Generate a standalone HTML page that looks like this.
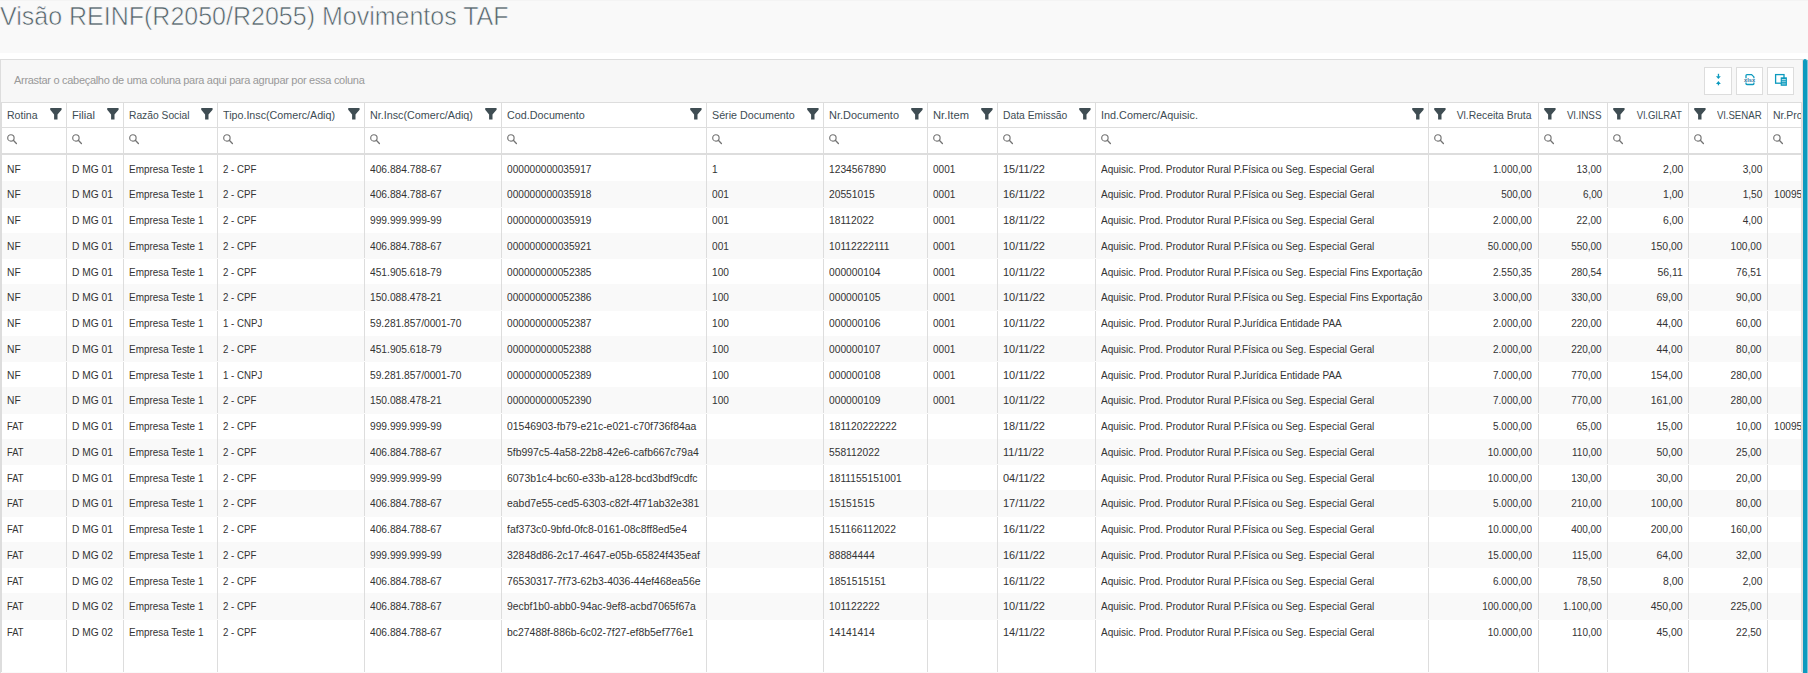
<!DOCTYPE html><html><head><meta charset="utf-8"><style>

html,body{margin:0;padding:0}
body{width:1808px;height:673px;overflow:hidden;position:relative;background:#f9f9f9;font-family:"Liberation Sans",sans-serif}
.a{position:absolute}
svg{display:block}
.title{left:0;top:4px;font-size:25px;line-height:25px;color:#53636a;white-space:nowrap;-webkit-text-stroke:0.6px #f9f9f9}
.band{left:0;top:53px;width:1808px;height:6px;background:#fff}
.grid{left:0;top:59px;width:1803px;height:614px;background:#fff;box-sizing:border-box;border:1px solid #ddd;border-bottom:0;overflow:hidden}
.tb{left:1px;top:60px;width:1801px;height:42px;background:#f7f7f7}
.tbtxt{left:14px;top:73px;font-size:11px;line-height:14px;color:#999;letter-spacing:-0.3px;white-space:nowrap}
.btn{top:67px;height:28px;box-sizing:border-box;border:1px solid #ddd;background:#fff}
.hl{left:1px;width:1801px;background:#ddd}
.vl{width:1px;background:#ddd}
.rowbg{left:2px;width:1799px;background:#f9f9f9}
.ht{font-size:11px;line-height:14px;color:#3d4c53;white-space:nowrap;top:108px}
.c{font-size:11px;line-height:14px;color:#333;white-space:nowrap}
.fi{top:108px;width:12px;height:12px}
.si{top:134px;width:12px;height:12px}
.sb{left:1803px;top:59px;width:4px;height:614px;background:#0c9abe;border-radius:2px 2px 0 0}
.sb2{left:1807px;top:60px;width:1px;height:613px;background:#7cc4d8}

</style></head><body>
<div class="a title">Visão REINF(R2050/R2055) Movimentos TAF</div>
<div class="a band"></div>
<div class="a" style="left:0;top:0;width:1808px;height:1px;background:#f4f4f4"></div>
<div class="a grid"></div>
<div class="a tb"></div>
<div class="a tbtxt">Arrastar o cabeçalho de uma coluna para aqui para agrupar por essa coluna</div>
<div class="a btn" style="left:1704px;width:28px"></div>
<div class="a btn" style="left:1736px;width:27px"></div>
<div class="a btn" style="left:1767px;width:27px"></div>
<svg class="a" style="left:1713px;top:72px" width="12" height="15" viewBox="1713 72 12 15"><rect x="1717.8" y="73.8" width="1.3" height="3" fill="#0c9abe"/><path d="M1716 76.2 H1720.8 L1718.4 79.1 Z" fill="#0c9abe"/><path d="M1716 84 H1720.8 L1718.4 81.1 Z" fill="#0c9abe"/><rect x="1717.8" y="83.5" width="1.3" height="1.8" fill="#0c9abe"/></svg>
<svg class="a" style="left:1742px;top:72px" width="15" height="15" viewBox="1742 72 15 15"><path d="M1746 78.2 V75.6 Q1746 74.6 1747 74.6 H1751.6 L1753.9 76.9 V78.2" stroke="#0c9abe" stroke-width="1.3" fill="none"/><path d="M1746 82.6 V83.6 Q1746 84.5 1747 84.5 H1753 Q1753.9 84.5 1753.9 83.6 V82.6" stroke="#0c9abe" stroke-width="1.3" fill="none"/><text x="1749.6" y="82.1" font-size="4.8" text-anchor="middle" textLength="11" lengthAdjust="spacingAndGlyphs" fill="#2a6e9c" font-family="Liberation Sans" font-weight="bold">xlsx</text></svg>
<svg class="a" style="left:1773px;top:72px" width="16" height="16" viewBox="1773 72 16 16"><rect x="1775.6" y="74.6" width="8.4" height="8.6" fill="none" stroke="#0c9abe" stroke-width="1.3"/><rect x="1780.7" y="77.3" width="6.2" height="8.5" fill="#0c9abe"/><rect x="1781.8" y="79.2" width="4" height="1" fill="#fff" opacity="0.85"/><rect x="1781.8" y="81.2" width="4" height="1" fill="#fff" opacity="0.6"/><rect x="1781.8" y="83" width="4" height="1.8" fill="#fff" opacity="0.35"/></svg>
<div class="a hl" style="top:102px;height:1px"></div>
<div class="a hl" style="top:127px;height:1px"></div>
<div class="a hl" style="top:153px;height:2px"></div>
<div class="a rowbg" style="top:181px;height:26.75px"></div>
<div class="a rowbg" style="top:232.5px;height:26.75px"></div>
<div class="a rowbg" style="top:284px;height:26.75px"></div>
<div class="a rowbg" style="top:335.5px;height:26.75px"></div>
<div class="a rowbg" style="top:387px;height:26.75px"></div>
<div class="a rowbg" style="top:438.5px;height:26.75px"></div>
<div class="a rowbg" style="top:490px;height:26.75px"></div>
<div class="a rowbg" style="top:541.5px;height:26.75px"></div>
<div class="a rowbg" style="top:593px;height:26.75px"></div>
<div class="a vl" style="left:1px;top:103px;height:570px"></div>
<div class="a vl" style="left:66px;top:103px;height:570px"></div>
<div class="a vl" style="left:123px;top:103px;height:570px"></div>
<div class="a vl" style="left:217px;top:103px;height:570px"></div>
<div class="a vl" style="left:364px;top:103px;height:570px"></div>
<div class="a vl" style="left:501px;top:103px;height:570px"></div>
<div class="a vl" style="left:706px;top:103px;height:570px"></div>
<div class="a vl" style="left:823px;top:103px;height:570px"></div>
<div class="a vl" style="left:927px;top:103px;height:570px"></div>
<div class="a vl" style="left:997px;top:103px;height:570px"></div>
<div class="a vl" style="left:1095px;top:103px;height:570px"></div>
<div class="a vl" style="left:1428px;top:103px;height:570px"></div>
<div class="a vl" style="left:1538px;top:103px;height:570px"></div>
<div class="a vl" style="left:1607px;top:103px;height:570px"></div>
<div class="a vl" style="left:1688px;top:103px;height:570px"></div>
<div class="a vl" style="left:1767px;top:103px;height:570px"></div>
<div class="a vl" style="left:1801px;top:103px;height:570px"></div>
<div class="a" style="left:66px;top:207px;width:1px;height:1px;background:#fbfbfb"></div>
<div class="a" style="left:123px;top:207px;width:1px;height:1px;background:#fbfbfb"></div>
<div class="a" style="left:217px;top:207px;width:1px;height:1px;background:#fbfbfb"></div>
<div class="a" style="left:364px;top:207px;width:1px;height:1px;background:#fbfbfb"></div>
<div class="a" style="left:501px;top:207px;width:1px;height:1px;background:#fbfbfb"></div>
<div class="a" style="left:706px;top:207px;width:1px;height:1px;background:#fbfbfb"></div>
<div class="a" style="left:823px;top:207px;width:1px;height:1px;background:#fbfbfb"></div>
<div class="a" style="left:927px;top:207px;width:1px;height:1px;background:#fbfbfb"></div>
<div class="a" style="left:997px;top:207px;width:1px;height:1px;background:#fbfbfb"></div>
<div class="a" style="left:1095px;top:207px;width:1px;height:1px;background:#fbfbfb"></div>
<div class="a" style="left:1428px;top:207px;width:1px;height:1px;background:#fbfbfb"></div>
<div class="a" style="left:1538px;top:207px;width:1px;height:1px;background:#fbfbfb"></div>
<div class="a" style="left:1607px;top:207px;width:1px;height:1px;background:#fbfbfb"></div>
<div class="a" style="left:1688px;top:207px;width:1px;height:1px;background:#fbfbfb"></div>
<div class="a" style="left:1767px;top:207px;width:1px;height:1px;background:#fbfbfb"></div>
<div class="a" style="left:66px;top:258px;width:1px;height:1px;background:#fbfbfb"></div>
<div class="a" style="left:123px;top:258px;width:1px;height:1px;background:#fbfbfb"></div>
<div class="a" style="left:217px;top:258px;width:1px;height:1px;background:#fbfbfb"></div>
<div class="a" style="left:364px;top:258px;width:1px;height:1px;background:#fbfbfb"></div>
<div class="a" style="left:501px;top:258px;width:1px;height:1px;background:#fbfbfb"></div>
<div class="a" style="left:706px;top:258px;width:1px;height:1px;background:#fbfbfb"></div>
<div class="a" style="left:823px;top:258px;width:1px;height:1px;background:#fbfbfb"></div>
<div class="a" style="left:927px;top:258px;width:1px;height:1px;background:#fbfbfb"></div>
<div class="a" style="left:997px;top:258px;width:1px;height:1px;background:#fbfbfb"></div>
<div class="a" style="left:1095px;top:258px;width:1px;height:1px;background:#fbfbfb"></div>
<div class="a" style="left:1428px;top:258px;width:1px;height:1px;background:#fbfbfb"></div>
<div class="a" style="left:1538px;top:258px;width:1px;height:1px;background:#fbfbfb"></div>
<div class="a" style="left:1607px;top:258px;width:1px;height:1px;background:#fbfbfb"></div>
<div class="a" style="left:1688px;top:258px;width:1px;height:1px;background:#fbfbfb"></div>
<div class="a" style="left:1767px;top:258px;width:1px;height:1px;background:#fbfbfb"></div>
<div class="a" style="left:66px;top:310px;width:1px;height:1px;background:#fbfbfb"></div>
<div class="a" style="left:123px;top:310px;width:1px;height:1px;background:#fbfbfb"></div>
<div class="a" style="left:217px;top:310px;width:1px;height:1px;background:#fbfbfb"></div>
<div class="a" style="left:364px;top:310px;width:1px;height:1px;background:#fbfbfb"></div>
<div class="a" style="left:501px;top:310px;width:1px;height:1px;background:#fbfbfb"></div>
<div class="a" style="left:706px;top:310px;width:1px;height:1px;background:#fbfbfb"></div>
<div class="a" style="left:823px;top:310px;width:1px;height:1px;background:#fbfbfb"></div>
<div class="a" style="left:927px;top:310px;width:1px;height:1px;background:#fbfbfb"></div>
<div class="a" style="left:997px;top:310px;width:1px;height:1px;background:#fbfbfb"></div>
<div class="a" style="left:1095px;top:310px;width:1px;height:1px;background:#fbfbfb"></div>
<div class="a" style="left:1428px;top:310px;width:1px;height:1px;background:#fbfbfb"></div>
<div class="a" style="left:1538px;top:310px;width:1px;height:1px;background:#fbfbfb"></div>
<div class="a" style="left:1607px;top:310px;width:1px;height:1px;background:#fbfbfb"></div>
<div class="a" style="left:1688px;top:310px;width:1px;height:1px;background:#fbfbfb"></div>
<div class="a" style="left:1767px;top:310px;width:1px;height:1px;background:#fbfbfb"></div>
<div class="a" style="left:66px;top:361px;width:1px;height:1px;background:#fbfbfb"></div>
<div class="a" style="left:123px;top:361px;width:1px;height:1px;background:#fbfbfb"></div>
<div class="a" style="left:217px;top:361px;width:1px;height:1px;background:#fbfbfb"></div>
<div class="a" style="left:364px;top:361px;width:1px;height:1px;background:#fbfbfb"></div>
<div class="a" style="left:501px;top:361px;width:1px;height:1px;background:#fbfbfb"></div>
<div class="a" style="left:706px;top:361px;width:1px;height:1px;background:#fbfbfb"></div>
<div class="a" style="left:823px;top:361px;width:1px;height:1px;background:#fbfbfb"></div>
<div class="a" style="left:927px;top:361px;width:1px;height:1px;background:#fbfbfb"></div>
<div class="a" style="left:997px;top:361px;width:1px;height:1px;background:#fbfbfb"></div>
<div class="a" style="left:1095px;top:361px;width:1px;height:1px;background:#fbfbfb"></div>
<div class="a" style="left:1428px;top:361px;width:1px;height:1px;background:#fbfbfb"></div>
<div class="a" style="left:1538px;top:361px;width:1px;height:1px;background:#fbfbfb"></div>
<div class="a" style="left:1607px;top:361px;width:1px;height:1px;background:#fbfbfb"></div>
<div class="a" style="left:1688px;top:361px;width:1px;height:1px;background:#fbfbfb"></div>
<div class="a" style="left:1767px;top:361px;width:1px;height:1px;background:#fbfbfb"></div>
<div class="a" style="left:66px;top:413px;width:1px;height:1px;background:#fbfbfb"></div>
<div class="a" style="left:123px;top:413px;width:1px;height:1px;background:#fbfbfb"></div>
<div class="a" style="left:217px;top:413px;width:1px;height:1px;background:#fbfbfb"></div>
<div class="a" style="left:364px;top:413px;width:1px;height:1px;background:#fbfbfb"></div>
<div class="a" style="left:501px;top:413px;width:1px;height:1px;background:#fbfbfb"></div>
<div class="a" style="left:706px;top:413px;width:1px;height:1px;background:#fbfbfb"></div>
<div class="a" style="left:823px;top:413px;width:1px;height:1px;background:#fbfbfb"></div>
<div class="a" style="left:927px;top:413px;width:1px;height:1px;background:#fbfbfb"></div>
<div class="a" style="left:997px;top:413px;width:1px;height:1px;background:#fbfbfb"></div>
<div class="a" style="left:1095px;top:413px;width:1px;height:1px;background:#fbfbfb"></div>
<div class="a" style="left:1428px;top:413px;width:1px;height:1px;background:#fbfbfb"></div>
<div class="a" style="left:1538px;top:413px;width:1px;height:1px;background:#fbfbfb"></div>
<div class="a" style="left:1607px;top:413px;width:1px;height:1px;background:#fbfbfb"></div>
<div class="a" style="left:1688px;top:413px;width:1px;height:1px;background:#fbfbfb"></div>
<div class="a" style="left:1767px;top:413px;width:1px;height:1px;background:#fbfbfb"></div>
<div class="a" style="left:66px;top:464px;width:1px;height:1px;background:#fbfbfb"></div>
<div class="a" style="left:123px;top:464px;width:1px;height:1px;background:#fbfbfb"></div>
<div class="a" style="left:217px;top:464px;width:1px;height:1px;background:#fbfbfb"></div>
<div class="a" style="left:364px;top:464px;width:1px;height:1px;background:#fbfbfb"></div>
<div class="a" style="left:501px;top:464px;width:1px;height:1px;background:#fbfbfb"></div>
<div class="a" style="left:706px;top:464px;width:1px;height:1px;background:#fbfbfb"></div>
<div class="a" style="left:823px;top:464px;width:1px;height:1px;background:#fbfbfb"></div>
<div class="a" style="left:927px;top:464px;width:1px;height:1px;background:#fbfbfb"></div>
<div class="a" style="left:997px;top:464px;width:1px;height:1px;background:#fbfbfb"></div>
<div class="a" style="left:1095px;top:464px;width:1px;height:1px;background:#fbfbfb"></div>
<div class="a" style="left:1428px;top:464px;width:1px;height:1px;background:#fbfbfb"></div>
<div class="a" style="left:1538px;top:464px;width:1px;height:1px;background:#fbfbfb"></div>
<div class="a" style="left:1607px;top:464px;width:1px;height:1px;background:#fbfbfb"></div>
<div class="a" style="left:1688px;top:464px;width:1px;height:1px;background:#fbfbfb"></div>
<div class="a" style="left:1767px;top:464px;width:1px;height:1px;background:#fbfbfb"></div>
<div class="a" style="left:66px;top:516px;width:1px;height:1px;background:#fbfbfb"></div>
<div class="a" style="left:123px;top:516px;width:1px;height:1px;background:#fbfbfb"></div>
<div class="a" style="left:217px;top:516px;width:1px;height:1px;background:#fbfbfb"></div>
<div class="a" style="left:364px;top:516px;width:1px;height:1px;background:#fbfbfb"></div>
<div class="a" style="left:501px;top:516px;width:1px;height:1px;background:#fbfbfb"></div>
<div class="a" style="left:706px;top:516px;width:1px;height:1px;background:#fbfbfb"></div>
<div class="a" style="left:823px;top:516px;width:1px;height:1px;background:#fbfbfb"></div>
<div class="a" style="left:927px;top:516px;width:1px;height:1px;background:#fbfbfb"></div>
<div class="a" style="left:997px;top:516px;width:1px;height:1px;background:#fbfbfb"></div>
<div class="a" style="left:1095px;top:516px;width:1px;height:1px;background:#fbfbfb"></div>
<div class="a" style="left:1428px;top:516px;width:1px;height:1px;background:#fbfbfb"></div>
<div class="a" style="left:1538px;top:516px;width:1px;height:1px;background:#fbfbfb"></div>
<div class="a" style="left:1607px;top:516px;width:1px;height:1px;background:#fbfbfb"></div>
<div class="a" style="left:1688px;top:516px;width:1px;height:1px;background:#fbfbfb"></div>
<div class="a" style="left:1767px;top:516px;width:1px;height:1px;background:#fbfbfb"></div>
<div class="a" style="left:66px;top:567px;width:1px;height:1px;background:#fbfbfb"></div>
<div class="a" style="left:123px;top:567px;width:1px;height:1px;background:#fbfbfb"></div>
<div class="a" style="left:217px;top:567px;width:1px;height:1px;background:#fbfbfb"></div>
<div class="a" style="left:364px;top:567px;width:1px;height:1px;background:#fbfbfb"></div>
<div class="a" style="left:501px;top:567px;width:1px;height:1px;background:#fbfbfb"></div>
<div class="a" style="left:706px;top:567px;width:1px;height:1px;background:#fbfbfb"></div>
<div class="a" style="left:823px;top:567px;width:1px;height:1px;background:#fbfbfb"></div>
<div class="a" style="left:927px;top:567px;width:1px;height:1px;background:#fbfbfb"></div>
<div class="a" style="left:997px;top:567px;width:1px;height:1px;background:#fbfbfb"></div>
<div class="a" style="left:1095px;top:567px;width:1px;height:1px;background:#fbfbfb"></div>
<div class="a" style="left:1428px;top:567px;width:1px;height:1px;background:#fbfbfb"></div>
<div class="a" style="left:1538px;top:567px;width:1px;height:1px;background:#fbfbfb"></div>
<div class="a" style="left:1607px;top:567px;width:1px;height:1px;background:#fbfbfb"></div>
<div class="a" style="left:1688px;top:567px;width:1px;height:1px;background:#fbfbfb"></div>
<div class="a" style="left:1767px;top:567px;width:1px;height:1px;background:#fbfbfb"></div>
<div class="a" style="left:66px;top:619px;width:1px;height:1px;background:#fbfbfb"></div>
<div class="a" style="left:123px;top:619px;width:1px;height:1px;background:#fbfbfb"></div>
<div class="a" style="left:217px;top:619px;width:1px;height:1px;background:#fbfbfb"></div>
<div class="a" style="left:364px;top:619px;width:1px;height:1px;background:#fbfbfb"></div>
<div class="a" style="left:501px;top:619px;width:1px;height:1px;background:#fbfbfb"></div>
<div class="a" style="left:706px;top:619px;width:1px;height:1px;background:#fbfbfb"></div>
<div class="a" style="left:823px;top:619px;width:1px;height:1px;background:#fbfbfb"></div>
<div class="a" style="left:927px;top:619px;width:1px;height:1px;background:#fbfbfb"></div>
<div class="a" style="left:997px;top:619px;width:1px;height:1px;background:#fbfbfb"></div>
<div class="a" style="left:1095px;top:619px;width:1px;height:1px;background:#fbfbfb"></div>
<div class="a" style="left:1428px;top:619px;width:1px;height:1px;background:#fbfbfb"></div>
<div class="a" style="left:1538px;top:619px;width:1px;height:1px;background:#fbfbfb"></div>
<div class="a" style="left:1607px;top:619px;width:1px;height:1px;background:#fbfbfb"></div>
<div class="a" style="left:1688px;top:619px;width:1px;height:1px;background:#fbfbfb"></div>
<div class="a" style="left:1767px;top:619px;width:1px;height:1px;background:#fbfbfb"></div>
<div class="a ht" style="left:7px;transform:scaleX(0.9594);transform-origin:0 50%">Rotina</div>
<div class="a fi" style="left:50px"><svg width="12" height="12" viewBox="0 0 12 12"><path d="M0.2 0.35 Q0.2 0 0.6 0 H11.2 Q11.6 0 11.6 0.35 V1.8 L7.5 6.5 V11.5 H4.1 V6.5 L0.2 1.8 Z" fill="#3f4d53"/></svg></div>
<div class="a si" style="left:7px"><svg width="12" height="12" viewBox="0 0 12 12"><circle cx="3.9" cy="3.9" r="3.2" fill="none" stroke="#737373" stroke-width="1.15"/><path d="M6.3 6.3 L9.4 9.5" stroke="#737373" stroke-width="1.3" stroke-linecap="round"/></svg></div>
<div class="a ht" style="left:72px;transform:scaleX(1.0143);transform-origin:0 50%">Filial</div>
<div class="a fi" style="left:107px"><svg width="12" height="12" viewBox="0 0 12 12"><path d="M0.2 0.35 Q0.2 0 0.6 0 H11.2 Q11.6 0 11.6 0.35 V1.8 L7.5 6.5 V11.5 H4.1 V6.5 L0.2 1.8 Z" fill="#3f4d53"/></svg></div>
<div class="a si" style="left:72px"><svg width="12" height="12" viewBox="0 0 12 12"><circle cx="3.9" cy="3.9" r="3.2" fill="none" stroke="#737373" stroke-width="1.15"/><path d="M6.3 6.3 L9.4 9.5" stroke="#737373" stroke-width="1.3" stroke-linecap="round"/></svg></div>
<div class="a ht" style="left:129px;transform:scaleX(0.9333);transform-origin:0 50%">Razão Social</div>
<div class="a fi" style="left:201px"><svg width="12" height="12" viewBox="0 0 12 12"><path d="M0.2 0.35 Q0.2 0 0.6 0 H11.2 Q11.6 0 11.6 0.35 V1.8 L7.5 6.5 V11.5 H4.1 V6.5 L0.2 1.8 Z" fill="#3f4d53"/></svg></div>
<div class="a si" style="left:129px"><svg width="12" height="12" viewBox="0 0 12 12"><circle cx="3.9" cy="3.9" r="3.2" fill="none" stroke="#737373" stroke-width="1.15"/><path d="M6.3 6.3 L9.4 9.5" stroke="#737373" stroke-width="1.3" stroke-linecap="round"/></svg></div>
<div class="a ht" style="left:223px;transform:scaleX(0.9730);transform-origin:0 50%">Tipo.Insc(Comerc/Adiq)</div>
<div class="a fi" style="left:348px"><svg width="12" height="12" viewBox="0 0 12 12"><path d="M0.2 0.35 Q0.2 0 0.6 0 H11.2 Q11.6 0 11.6 0.35 V1.8 L7.5 6.5 V11.5 H4.1 V6.5 L0.2 1.8 Z" fill="#3f4d53"/></svg></div>
<div class="a si" style="left:223px"><svg width="12" height="12" viewBox="0 0 12 12"><circle cx="3.9" cy="3.9" r="3.2" fill="none" stroke="#737373" stroke-width="1.15"/><path d="M6.3 6.3 L9.4 9.5" stroke="#737373" stroke-width="1.3" stroke-linecap="round"/></svg></div>
<div class="a ht" style="left:370px;transform:scaleX(0.9788);transform-origin:0 50%">Nr.Insc(Comerc/Adiq)</div>
<div class="a fi" style="left:485px"><svg width="12" height="12" viewBox="0 0 12 12"><path d="M0.2 0.35 Q0.2 0 0.6 0 H11.2 Q11.6 0 11.6 0.35 V1.8 L7.5 6.5 V11.5 H4.1 V6.5 L0.2 1.8 Z" fill="#3f4d53"/></svg></div>
<div class="a si" style="left:370px"><svg width="12" height="12" viewBox="0 0 12 12"><circle cx="3.9" cy="3.9" r="3.2" fill="none" stroke="#737373" stroke-width="1.15"/><path d="M6.3 6.3 L9.4 9.5" stroke="#737373" stroke-width="1.3" stroke-linecap="round"/></svg></div>
<div class="a ht" style="left:507px;transform:scaleX(0.9785);transform-origin:0 50%">Cod.Documento</div>
<div class="a fi" style="left:690px"><svg width="12" height="12" viewBox="0 0 12 12"><path d="M0.2 0.35 Q0.2 0 0.6 0 H11.2 Q11.6 0 11.6 0.35 V1.8 L7.5 6.5 V11.5 H4.1 V6.5 L0.2 1.8 Z" fill="#3f4d53"/></svg></div>
<div class="a si" style="left:507px"><svg width="12" height="12" viewBox="0 0 12 12"><circle cx="3.9" cy="3.9" r="3.2" fill="none" stroke="#737373" stroke-width="1.15"/><path d="M6.3 6.3 L9.4 9.5" stroke="#737373" stroke-width="1.3" stroke-linecap="round"/></svg></div>
<div class="a ht" style="left:712px;transform:scaleX(0.9738);transform-origin:0 50%">Série Documento</div>
<div class="a fi" style="left:807px"><svg width="12" height="12" viewBox="0 0 12 12"><path d="M0.2 0.35 Q0.2 0 0.6 0 H11.2 Q11.6 0 11.6 0.35 V1.8 L7.5 6.5 V11.5 H4.1 V6.5 L0.2 1.8 Z" fill="#3f4d53"/></svg></div>
<div class="a si" style="left:712px"><svg width="12" height="12" viewBox="0 0 12 12"><circle cx="3.9" cy="3.9" r="3.2" fill="none" stroke="#737373" stroke-width="1.15"/><path d="M6.3 6.3 L9.4 9.5" stroke="#737373" stroke-width="1.3" stroke-linecap="round"/></svg></div>
<div class="a ht" style="left:829px;transform:scaleX(0.9957);transform-origin:0 50%">Nr.Documento</div>
<div class="a fi" style="left:911px"><svg width="12" height="12" viewBox="0 0 12 12"><path d="M0.2 0.35 Q0.2 0 0.6 0 H11.2 Q11.6 0 11.6 0.35 V1.8 L7.5 6.5 V11.5 H4.1 V6.5 L0.2 1.8 Z" fill="#3f4d53"/></svg></div>
<div class="a si" style="left:829px"><svg width="12" height="12" viewBox="0 0 12 12"><circle cx="3.9" cy="3.9" r="3.2" fill="none" stroke="#737373" stroke-width="1.15"/><path d="M6.3 6.3 L9.4 9.5" stroke="#737373" stroke-width="1.3" stroke-linecap="round"/></svg></div>
<div class="a ht" style="left:933px;transform:scaleX(1.0147);transform-origin:0 50%">Nr.Item</div>
<div class="a fi" style="left:981px"><svg width="12" height="12" viewBox="0 0 12 12"><path d="M0.2 0.35 Q0.2 0 0.6 0 H11.2 Q11.6 0 11.6 0.35 V1.8 L7.5 6.5 V11.5 H4.1 V6.5 L0.2 1.8 Z" fill="#3f4d53"/></svg></div>
<div class="a si" style="left:933px"><svg width="12" height="12" viewBox="0 0 12 12"><circle cx="3.9" cy="3.9" r="3.2" fill="none" stroke="#737373" stroke-width="1.15"/><path d="M6.3 6.3 L9.4 9.5" stroke="#737373" stroke-width="1.3" stroke-linecap="round"/></svg></div>
<div class="a ht" style="left:1003px;transform:scaleX(0.9388);transform-origin:0 50%">Data Emissão</div>
<div class="a fi" style="left:1079px"><svg width="12" height="12" viewBox="0 0 12 12"><path d="M0.2 0.35 Q0.2 0 0.6 0 H11.2 Q11.6 0 11.6 0.35 V1.8 L7.5 6.5 V11.5 H4.1 V6.5 L0.2 1.8 Z" fill="#3f4d53"/></svg></div>
<div class="a si" style="left:1003px"><svg width="12" height="12" viewBox="0 0 12 12"><circle cx="3.9" cy="3.9" r="3.2" fill="none" stroke="#737373" stroke-width="1.15"/><path d="M6.3 6.3 L9.4 9.5" stroke="#737373" stroke-width="1.3" stroke-linecap="round"/></svg></div>
<div class="a ht" style="left:1101px;transform:scaleX(0.9845);transform-origin:0 50%">Ind.Comerc/Aquisic.</div>
<div class="a fi" style="left:1412px"><svg width="12" height="12" viewBox="0 0 12 12"><path d="M0.2 0.35 Q0.2 0 0.6 0 H11.2 Q11.6 0 11.6 0.35 V1.8 L7.5 6.5 V11.5 H4.1 V6.5 L0.2 1.8 Z" fill="#3f4d53"/></svg></div>
<div class="a si" style="left:1101px"><svg width="12" height="12" viewBox="0 0 12 12"><circle cx="3.9" cy="3.9" r="3.2" fill="none" stroke="#737373" stroke-width="1.15"/><path d="M6.3 6.3 L9.4 9.5" stroke="#737373" stroke-width="1.3" stroke-linecap="round"/></svg></div>
<div class="a fi" style="left:1434px"><svg width="12" height="12" viewBox="0 0 12 12"><path d="M0.2 0.35 Q0.2 0 0.6 0 H11.2 Q11.6 0 11.6 0.35 V1.8 L7.5 6.5 V11.5 H4.1 V6.5 L0.2 1.8 Z" fill="#3f4d53"/></svg></div>
<div class="a ht" style="right:277px;transform:scaleX(0.9418);transform-origin:100% 50%">Vl.Receita Bruta</div>
<div class="a si" style="left:1434px"><svg width="12" height="12" viewBox="0 0 12 12"><circle cx="3.9" cy="3.9" r="3.2" fill="none" stroke="#737373" stroke-width="1.15"/><path d="M6.3 6.3 L9.4 9.5" stroke="#737373" stroke-width="1.3" stroke-linecap="round"/></svg></div>
<div class="a fi" style="left:1544px"><svg width="12" height="12" viewBox="0 0 12 12"><path d="M0.2 0.35 Q0.2 0 0.6 0 H11.2 Q11.6 0 11.6 0.35 V1.8 L7.5 6.5 V11.5 H4.1 V6.5 L0.2 1.8 Z" fill="#3f4d53"/></svg></div>
<div class="a ht" style="right:206px;transform:scaleX(0.8974);transform-origin:100% 50%">Vl.INSS</div>
<div class="a si" style="left:1544px"><svg width="12" height="12" viewBox="0 0 12 12"><circle cx="3.9" cy="3.9" r="3.2" fill="none" stroke="#737373" stroke-width="1.15"/><path d="M6.3 6.3 L9.4 9.5" stroke="#737373" stroke-width="1.3" stroke-linecap="round"/></svg></div>
<div class="a fi" style="left:1613px"><svg width="12" height="12" viewBox="0 0 12 12"><path d="M0.2 0.35 Q0.2 0 0.6 0 H11.2 Q11.6 0 11.6 0.35 V1.8 L7.5 6.5 V11.5 H4.1 V6.5 L0.2 1.8 Z" fill="#3f4d53"/></svg></div>
<div class="a ht" style="right:126px;transform:scaleX(0.8692);transform-origin:100% 50%">Vl.GILRAT</div>
<div class="a si" style="left:1613px"><svg width="12" height="12" viewBox="0 0 12 12"><circle cx="3.9" cy="3.9" r="3.2" fill="none" stroke="#737373" stroke-width="1.15"/><path d="M6.3 6.3 L9.4 9.5" stroke="#737373" stroke-width="1.3" stroke-linecap="round"/></svg></div>
<div class="a fi" style="left:1694px"><svg width="12" height="12" viewBox="0 0 12 12"><path d="M0.2 0.35 Q0.2 0 0.6 0 H11.2 Q11.6 0 11.6 0.35 V1.8 L7.5 6.5 V11.5 H4.1 V6.5 L0.2 1.8 Z" fill="#3f4d53"/></svg></div>
<div class="a ht" style="right:46px;transform:scaleX(0.8800);transform-origin:100% 50%">Vl.SENAR</div>
<div class="a si" style="left:1694px"><svg width="12" height="12" viewBox="0 0 12 12"><circle cx="3.9" cy="3.9" r="3.2" fill="none" stroke="#737373" stroke-width="1.15"/><path d="M6.3 6.3 L9.4 9.5" stroke="#737373" stroke-width="1.3" stroke-linecap="round"/></svg></div>
<div class="a ht" style="left:1773px;transform:scaleX(0.9500);transform-origin:0 50%">Nr.Pro</div>
<div class="a si" style="left:1773px"><svg width="12" height="12" viewBox="0 0 12 12"><circle cx="3.9" cy="3.9" r="3.2" fill="none" stroke="#737373" stroke-width="1.15"/><path d="M6.3 6.3 L9.4 9.5" stroke="#737373" stroke-width="1.3" stroke-linecap="round"/></svg></div>
<div class="a c" style="top:162px;left:7px;transform:scaleX(0.9300);transform-origin:0 50%">NF</div>
<div class="a c" style="top:162px;left:72px;transform:scaleX(0.9280);transform-origin:0 50%">D MG 01</div>
<div class="a c" style="top:162px;left:129px;transform:scaleX(0.9040);transform-origin:0 50%">Empresa Teste 1</div>
<div class="a c" style="top:162px;left:223px;transform:scaleX(0.8800);transform-origin:0 50%">2 - CPF</div>
<div class="a c" style="top:162px;left:370px;transform:scaleX(0.9290);transform-origin:0 50%">406.884.788-67</div>
<div class="a c" style="top:162px;left:507px;transform:scaleX(0.9200);transform-origin:0 50%">000000000035917</div>
<div class="a c" style="top:162px;left:712px;transform:scaleX(0.9200);transform-origin:0 50%">1</div>
<div class="a c" style="top:162px;left:829px;transform:scaleX(0.9330);transform-origin:0 50%">1234567890</div>
<div class="a c" style="top:162px;left:933px;transform:scaleX(0.9100);transform-origin:0 50%">0001</div>
<div class="a c" style="top:162px;left:1003px;transform:scaleX(0.9980);transform-origin:0 50%">15/11/22</div>
<div class="a c" style="top:162px;left:1101px;transform:scaleX(0.9130);transform-origin:0 50%">Aquisic. Prod. Produtor Rural P.Física ou Seg. Especial Geral</div>
<div class="a c" style="top:162px;right:276px;transform:scaleX(0.9050);transform-origin:100% 50%">1.000,00</div>
<div class="a c" style="top:162px;right:206px;transform:scaleX(0.9070);transform-origin:100% 50%">13,00</div>
<div class="a c" style="top:162px;right:125px;transform:scaleX(0.9480);transform-origin:100% 50%">2,00</div>
<div class="a c" style="top:162px;right:46px;transform:scaleX(0.9240);transform-origin:100% 50%">3,00</div>
<div class="a c" style="top:187px;left:7px;transform:scaleX(0.9300);transform-origin:0 50%">NF</div>
<div class="a c" style="top:187px;left:72px;transform:scaleX(0.9280);transform-origin:0 50%">D MG 01</div>
<div class="a c" style="top:187px;left:129px;transform:scaleX(0.9040);transform-origin:0 50%">Empresa Teste 1</div>
<div class="a c" style="top:187px;left:223px;transform:scaleX(0.8800);transform-origin:0 50%">2 - CPF</div>
<div class="a c" style="top:187px;left:370px;transform:scaleX(0.9290);transform-origin:0 50%">406.884.788-67</div>
<div class="a c" style="top:187px;left:507px;transform:scaleX(0.9200);transform-origin:0 50%">000000000035918</div>
<div class="a c" style="top:187px;left:712px;transform:scaleX(0.9200);transform-origin:0 50%">001</div>
<div class="a c" style="top:187px;left:829px;transform:scaleX(0.9330);transform-origin:0 50%">20551015</div>
<div class="a c" style="top:187px;left:933px;transform:scaleX(0.9100);transform-origin:0 50%">0001</div>
<div class="a c" style="top:187px;left:1003px;transform:scaleX(0.9980);transform-origin:0 50%">16/11/22</div>
<div class="a c" style="top:187px;left:1101px;transform:scaleX(0.9130);transform-origin:0 50%">Aquisic. Prod. Produtor Rural P.Física ou Seg. Especial Geral</div>
<div class="a c" style="top:187px;right:276px;transform:scaleX(0.9050);transform-origin:100% 50%">500,00</div>
<div class="a c" style="top:187px;right:206px;transform:scaleX(0.9070);transform-origin:100% 50%">6,00</div>
<div class="a c" style="top:187px;right:125px;transform:scaleX(0.9480);transform-origin:100% 50%">1,00</div>
<div class="a c" style="top:187px;right:46px;transform:scaleX(0.9240);transform-origin:100% 50%">1,50</div>
<div class="a c" style="top:187px;left:1774px;transform:scaleX(0.9200);transform-origin:0 50%">10095</div>
<div class="a c" style="top:213px;left:7px;transform:scaleX(0.9300);transform-origin:0 50%">NF</div>
<div class="a c" style="top:213px;left:72px;transform:scaleX(0.9280);transform-origin:0 50%">D MG 01</div>
<div class="a c" style="top:213px;left:129px;transform:scaleX(0.9040);transform-origin:0 50%">Empresa Teste 1</div>
<div class="a c" style="top:213px;left:223px;transform:scaleX(0.8800);transform-origin:0 50%">2 - CPF</div>
<div class="a c" style="top:213px;left:370px;transform:scaleX(0.9290);transform-origin:0 50%">999.999.999-99</div>
<div class="a c" style="top:213px;left:507px;transform:scaleX(0.9200);transform-origin:0 50%">000000000035919</div>
<div class="a c" style="top:213px;left:712px;transform:scaleX(0.9200);transform-origin:0 50%">001</div>
<div class="a c" style="top:213px;left:829px;transform:scaleX(0.9330);transform-origin:0 50%">18112022</div>
<div class="a c" style="top:213px;left:933px;transform:scaleX(0.9100);transform-origin:0 50%">0001</div>
<div class="a c" style="top:213px;left:1003px;transform:scaleX(0.9980);transform-origin:0 50%">18/11/22</div>
<div class="a c" style="top:213px;left:1101px;transform:scaleX(0.9130);transform-origin:0 50%">Aquisic. Prod. Produtor Rural P.Física ou Seg. Especial Geral</div>
<div class="a c" style="top:213px;right:276px;transform:scaleX(0.9050);transform-origin:100% 50%">2.000,00</div>
<div class="a c" style="top:213px;right:206px;transform:scaleX(0.9070);transform-origin:100% 50%">22,00</div>
<div class="a c" style="top:213px;right:125px;transform:scaleX(0.9480);transform-origin:100% 50%">6,00</div>
<div class="a c" style="top:213px;right:46px;transform:scaleX(0.9240);transform-origin:100% 50%">4,00</div>
<div class="a c" style="top:239px;left:7px;transform:scaleX(0.9300);transform-origin:0 50%">NF</div>
<div class="a c" style="top:239px;left:72px;transform:scaleX(0.9280);transform-origin:0 50%">D MG 01</div>
<div class="a c" style="top:239px;left:129px;transform:scaleX(0.9040);transform-origin:0 50%">Empresa Teste 1</div>
<div class="a c" style="top:239px;left:223px;transform:scaleX(0.8800);transform-origin:0 50%">2 - CPF</div>
<div class="a c" style="top:239px;left:370px;transform:scaleX(0.9290);transform-origin:0 50%">406.884.788-67</div>
<div class="a c" style="top:239px;left:507px;transform:scaleX(0.9200);transform-origin:0 50%">000000000035921</div>
<div class="a c" style="top:239px;left:712px;transform:scaleX(0.9200);transform-origin:0 50%">001</div>
<div class="a c" style="top:239px;left:829px;transform:scaleX(0.9330);transform-origin:0 50%">10112222111</div>
<div class="a c" style="top:239px;left:933px;transform:scaleX(0.9100);transform-origin:0 50%">0001</div>
<div class="a c" style="top:239px;left:1003px;transform:scaleX(0.9980);transform-origin:0 50%">10/11/22</div>
<div class="a c" style="top:239px;left:1101px;transform:scaleX(0.9130);transform-origin:0 50%">Aquisic. Prod. Produtor Rural P.Física ou Seg. Especial Geral</div>
<div class="a c" style="top:239px;right:276px;transform:scaleX(0.9050);transform-origin:100% 50%">50.000,00</div>
<div class="a c" style="top:239px;right:206px;transform:scaleX(0.9070);transform-origin:100% 50%">550,00</div>
<div class="a c" style="top:239px;right:125px;transform:scaleX(0.9480);transform-origin:100% 50%">150,00</div>
<div class="a c" style="top:239px;right:46px;transform:scaleX(0.9240);transform-origin:100% 50%">100,00</div>
<div class="a c" style="top:265px;left:7px;transform:scaleX(0.9300);transform-origin:0 50%">NF</div>
<div class="a c" style="top:265px;left:72px;transform:scaleX(0.9280);transform-origin:0 50%">D MG 01</div>
<div class="a c" style="top:265px;left:129px;transform:scaleX(0.9040);transform-origin:0 50%">Empresa Teste 1</div>
<div class="a c" style="top:265px;left:223px;transform:scaleX(0.8800);transform-origin:0 50%">2 - CPF</div>
<div class="a c" style="top:265px;left:370px;transform:scaleX(0.9290);transform-origin:0 50%">451.905.618-79</div>
<div class="a c" style="top:265px;left:507px;transform:scaleX(0.9200);transform-origin:0 50%">000000000052385</div>
<div class="a c" style="top:265px;left:712px;transform:scaleX(0.9200);transform-origin:0 50%">100</div>
<div class="a c" style="top:265px;left:829px;transform:scaleX(0.9330);transform-origin:0 50%">000000104</div>
<div class="a c" style="top:265px;left:933px;transform:scaleX(0.9100);transform-origin:0 50%">0001</div>
<div class="a c" style="top:265px;left:1003px;transform:scaleX(0.9980);transform-origin:0 50%">10/11/22</div>
<div class="a c" style="top:265px;left:1101px;transform:scaleX(0.9130);transform-origin:0 50%">Aquisic. Prod. Produtor Rural P.Física ou Seg. Especial Fins Exportação</div>
<div class="a c" style="top:265px;right:276px;transform:scaleX(0.9050);transform-origin:100% 50%">2.550,35</div>
<div class="a c" style="top:265px;right:206px;transform:scaleX(0.9070);transform-origin:100% 50%">280,54</div>
<div class="a c" style="top:265px;right:125px;transform:scaleX(0.9480);transform-origin:100% 50%">56,11</div>
<div class="a c" style="top:265px;right:46px;transform:scaleX(0.9240);transform-origin:100% 50%">76,51</div>
<div class="a c" style="top:290px;left:7px;transform:scaleX(0.9300);transform-origin:0 50%">NF</div>
<div class="a c" style="top:290px;left:72px;transform:scaleX(0.9280);transform-origin:0 50%">D MG 01</div>
<div class="a c" style="top:290px;left:129px;transform:scaleX(0.9040);transform-origin:0 50%">Empresa Teste 1</div>
<div class="a c" style="top:290px;left:223px;transform:scaleX(0.8800);transform-origin:0 50%">2 - CPF</div>
<div class="a c" style="top:290px;left:370px;transform:scaleX(0.9290);transform-origin:0 50%">150.088.478-21</div>
<div class="a c" style="top:290px;left:507px;transform:scaleX(0.9200);transform-origin:0 50%">000000000052386</div>
<div class="a c" style="top:290px;left:712px;transform:scaleX(0.9200);transform-origin:0 50%">100</div>
<div class="a c" style="top:290px;left:829px;transform:scaleX(0.9330);transform-origin:0 50%">000000105</div>
<div class="a c" style="top:290px;left:933px;transform:scaleX(0.9100);transform-origin:0 50%">0001</div>
<div class="a c" style="top:290px;left:1003px;transform:scaleX(0.9980);transform-origin:0 50%">10/11/22</div>
<div class="a c" style="top:290px;left:1101px;transform:scaleX(0.9130);transform-origin:0 50%">Aquisic. Prod. Produtor Rural P.Física ou Seg. Especial Fins Exportação</div>
<div class="a c" style="top:290px;right:276px;transform:scaleX(0.9050);transform-origin:100% 50%">3.000,00</div>
<div class="a c" style="top:290px;right:206px;transform:scaleX(0.9070);transform-origin:100% 50%">330,00</div>
<div class="a c" style="top:290px;right:125px;transform:scaleX(0.9480);transform-origin:100% 50%">69,00</div>
<div class="a c" style="top:290px;right:46px;transform:scaleX(0.9240);transform-origin:100% 50%">90,00</div>
<div class="a c" style="top:316px;left:7px;transform:scaleX(0.9300);transform-origin:0 50%">NF</div>
<div class="a c" style="top:316px;left:72px;transform:scaleX(0.9280);transform-origin:0 50%">D MG 01</div>
<div class="a c" style="top:316px;left:129px;transform:scaleX(0.9040);transform-origin:0 50%">Empresa Teste 1</div>
<div class="a c" style="top:316px;left:223px;transform:scaleX(0.8800);transform-origin:0 50%">1 - CNPJ</div>
<div class="a c" style="top:316px;left:370px;transform:scaleX(0.9290);transform-origin:0 50%">59.281.857/0001-70</div>
<div class="a c" style="top:316px;left:507px;transform:scaleX(0.9200);transform-origin:0 50%">000000000052387</div>
<div class="a c" style="top:316px;left:712px;transform:scaleX(0.9200);transform-origin:0 50%">100</div>
<div class="a c" style="top:316px;left:829px;transform:scaleX(0.9330);transform-origin:0 50%">000000106</div>
<div class="a c" style="top:316px;left:933px;transform:scaleX(0.9100);transform-origin:0 50%">0001</div>
<div class="a c" style="top:316px;left:1003px;transform:scaleX(0.9980);transform-origin:0 50%">10/11/22</div>
<div class="a c" style="top:316px;left:1101px;transform:scaleX(0.9130);transform-origin:0 50%">Aquisic. Prod. Produtor Rural P.Jurídica Entidade PAA</div>
<div class="a c" style="top:316px;right:276px;transform:scaleX(0.9050);transform-origin:100% 50%">2.000,00</div>
<div class="a c" style="top:316px;right:206px;transform:scaleX(0.9070);transform-origin:100% 50%">220,00</div>
<div class="a c" style="top:316px;right:125px;transform:scaleX(0.9480);transform-origin:100% 50%">44,00</div>
<div class="a c" style="top:316px;right:46px;transform:scaleX(0.9240);transform-origin:100% 50%">60,00</div>
<div class="a c" style="top:342px;left:7px;transform:scaleX(0.9300);transform-origin:0 50%">NF</div>
<div class="a c" style="top:342px;left:72px;transform:scaleX(0.9280);transform-origin:0 50%">D MG 01</div>
<div class="a c" style="top:342px;left:129px;transform:scaleX(0.9040);transform-origin:0 50%">Empresa Teste 1</div>
<div class="a c" style="top:342px;left:223px;transform:scaleX(0.8800);transform-origin:0 50%">2 - CPF</div>
<div class="a c" style="top:342px;left:370px;transform:scaleX(0.9290);transform-origin:0 50%">451.905.618-79</div>
<div class="a c" style="top:342px;left:507px;transform:scaleX(0.9200);transform-origin:0 50%">000000000052388</div>
<div class="a c" style="top:342px;left:712px;transform:scaleX(0.9200);transform-origin:0 50%">100</div>
<div class="a c" style="top:342px;left:829px;transform:scaleX(0.9330);transform-origin:0 50%">000000107</div>
<div class="a c" style="top:342px;left:933px;transform:scaleX(0.9100);transform-origin:0 50%">0001</div>
<div class="a c" style="top:342px;left:1003px;transform:scaleX(0.9980);transform-origin:0 50%">10/11/22</div>
<div class="a c" style="top:342px;left:1101px;transform:scaleX(0.9130);transform-origin:0 50%">Aquisic. Prod. Produtor Rural P.Física ou Seg. Especial Geral</div>
<div class="a c" style="top:342px;right:276px;transform:scaleX(0.9050);transform-origin:100% 50%">2.000,00</div>
<div class="a c" style="top:342px;right:206px;transform:scaleX(0.9070);transform-origin:100% 50%">220,00</div>
<div class="a c" style="top:342px;right:125px;transform:scaleX(0.9480);transform-origin:100% 50%">44,00</div>
<div class="a c" style="top:342px;right:46px;transform:scaleX(0.9240);transform-origin:100% 50%">80,00</div>
<div class="a c" style="top:368px;left:7px;transform:scaleX(0.9300);transform-origin:0 50%">NF</div>
<div class="a c" style="top:368px;left:72px;transform:scaleX(0.9280);transform-origin:0 50%">D MG 01</div>
<div class="a c" style="top:368px;left:129px;transform:scaleX(0.9040);transform-origin:0 50%">Empresa Teste 1</div>
<div class="a c" style="top:368px;left:223px;transform:scaleX(0.8800);transform-origin:0 50%">1 - CNPJ</div>
<div class="a c" style="top:368px;left:370px;transform:scaleX(0.9290);transform-origin:0 50%">59.281.857/0001-70</div>
<div class="a c" style="top:368px;left:507px;transform:scaleX(0.9200);transform-origin:0 50%">000000000052389</div>
<div class="a c" style="top:368px;left:712px;transform:scaleX(0.9200);transform-origin:0 50%">100</div>
<div class="a c" style="top:368px;left:829px;transform:scaleX(0.9330);transform-origin:0 50%">000000108</div>
<div class="a c" style="top:368px;left:933px;transform:scaleX(0.9100);transform-origin:0 50%">0001</div>
<div class="a c" style="top:368px;left:1003px;transform:scaleX(0.9980);transform-origin:0 50%">10/11/22</div>
<div class="a c" style="top:368px;left:1101px;transform:scaleX(0.9130);transform-origin:0 50%">Aquisic. Prod. Produtor Rural P.Jurídica Entidade PAA</div>
<div class="a c" style="top:368px;right:276px;transform:scaleX(0.9050);transform-origin:100% 50%">7.000,00</div>
<div class="a c" style="top:368px;right:206px;transform:scaleX(0.9070);transform-origin:100% 50%">770,00</div>
<div class="a c" style="top:368px;right:125px;transform:scaleX(0.9480);transform-origin:100% 50%">154,00</div>
<div class="a c" style="top:368px;right:46px;transform:scaleX(0.9240);transform-origin:100% 50%">280,00</div>
<div class="a c" style="top:393px;left:7px;transform:scaleX(0.9300);transform-origin:0 50%">NF</div>
<div class="a c" style="top:393px;left:72px;transform:scaleX(0.9280);transform-origin:0 50%">D MG 01</div>
<div class="a c" style="top:393px;left:129px;transform:scaleX(0.9040);transform-origin:0 50%">Empresa Teste 1</div>
<div class="a c" style="top:393px;left:223px;transform:scaleX(0.8800);transform-origin:0 50%">2 - CPF</div>
<div class="a c" style="top:393px;left:370px;transform:scaleX(0.9290);transform-origin:0 50%">150.088.478-21</div>
<div class="a c" style="top:393px;left:507px;transform:scaleX(0.9200);transform-origin:0 50%">000000000052390</div>
<div class="a c" style="top:393px;left:712px;transform:scaleX(0.9200);transform-origin:0 50%">100</div>
<div class="a c" style="top:393px;left:829px;transform:scaleX(0.9330);transform-origin:0 50%">000000109</div>
<div class="a c" style="top:393px;left:933px;transform:scaleX(0.9100);transform-origin:0 50%">0001</div>
<div class="a c" style="top:393px;left:1003px;transform:scaleX(0.9980);transform-origin:0 50%">10/11/22</div>
<div class="a c" style="top:393px;left:1101px;transform:scaleX(0.9130);transform-origin:0 50%">Aquisic. Prod. Produtor Rural P.Física ou Seg. Especial Geral</div>
<div class="a c" style="top:393px;right:276px;transform:scaleX(0.9050);transform-origin:100% 50%">7.000,00</div>
<div class="a c" style="top:393px;right:206px;transform:scaleX(0.9070);transform-origin:100% 50%">770,00</div>
<div class="a c" style="top:393px;right:125px;transform:scaleX(0.9480);transform-origin:100% 50%">161,00</div>
<div class="a c" style="top:393px;right:46px;transform:scaleX(0.9240);transform-origin:100% 50%">280,00</div>
<div class="a c" style="top:419px;left:7px;transform:scaleX(0.8500);transform-origin:0 50%">FAT</div>
<div class="a c" style="top:419px;left:72px;transform:scaleX(0.9280);transform-origin:0 50%">D MG 01</div>
<div class="a c" style="top:419px;left:129px;transform:scaleX(0.9040);transform-origin:0 50%">Empresa Teste 1</div>
<div class="a c" style="top:419px;left:223px;transform:scaleX(0.8800);transform-origin:0 50%">2 - CPF</div>
<div class="a c" style="top:419px;left:370px;transform:scaleX(0.9290);transform-origin:0 50%">999.999.999-99</div>
<div class="a c" style="top:419px;left:507px;transform:scaleX(0.9470);transform-origin:0 50%">01546903-fb79-e21c-e021-c70f736f84aa</div>
<div class="a c" style="top:419px;left:829px;transform:scaleX(0.9330);transform-origin:0 50%">181120222222</div>
<div class="a c" style="top:419px;left:1003px;transform:scaleX(0.9980);transform-origin:0 50%">18/11/22</div>
<div class="a c" style="top:419px;left:1101px;transform:scaleX(0.9130);transform-origin:0 50%">Aquisic. Prod. Produtor Rural P.Física ou Seg. Especial Geral</div>
<div class="a c" style="top:419px;right:276px;transform:scaleX(0.9050);transform-origin:100% 50%">5.000,00</div>
<div class="a c" style="top:419px;right:206px;transform:scaleX(0.9070);transform-origin:100% 50%">65,00</div>
<div class="a c" style="top:419px;right:125px;transform:scaleX(0.9480);transform-origin:100% 50%">15,00</div>
<div class="a c" style="top:419px;right:46px;transform:scaleX(0.9240);transform-origin:100% 50%">10,00</div>
<div class="a c" style="top:419px;left:1774px;transform:scaleX(0.9200);transform-origin:0 50%">10095</div>
<div class="a c" style="top:445px;left:7px;transform:scaleX(0.8500);transform-origin:0 50%">FAT</div>
<div class="a c" style="top:445px;left:72px;transform:scaleX(0.9280);transform-origin:0 50%">D MG 01</div>
<div class="a c" style="top:445px;left:129px;transform:scaleX(0.9040);transform-origin:0 50%">Empresa Teste 1</div>
<div class="a c" style="top:445px;left:223px;transform:scaleX(0.8800);transform-origin:0 50%">2 - CPF</div>
<div class="a c" style="top:445px;left:370px;transform:scaleX(0.9290);transform-origin:0 50%">406.884.788-67</div>
<div class="a c" style="top:445px;left:507px;transform:scaleX(0.9470);transform-origin:0 50%">5fb997c5-4a58-22b8-42e6-cafb667c79a4</div>
<div class="a c" style="top:445px;left:829px;transform:scaleX(0.9330);transform-origin:0 50%">558112022</div>
<div class="a c" style="top:445px;left:1003px;transform:scaleX(0.9980);transform-origin:0 50%">11/11/22</div>
<div class="a c" style="top:445px;left:1101px;transform:scaleX(0.9130);transform-origin:0 50%">Aquisic. Prod. Produtor Rural P.Física ou Seg. Especial Geral</div>
<div class="a c" style="top:445px;right:276px;transform:scaleX(0.9050);transform-origin:100% 50%">10.000,00</div>
<div class="a c" style="top:445px;right:206px;transform:scaleX(0.9070);transform-origin:100% 50%">110,00</div>
<div class="a c" style="top:445px;right:125px;transform:scaleX(0.9480);transform-origin:100% 50%">50,00</div>
<div class="a c" style="top:445px;right:46px;transform:scaleX(0.9240);transform-origin:100% 50%">25,00</div>
<div class="a c" style="top:471px;left:7px;transform:scaleX(0.8500);transform-origin:0 50%">FAT</div>
<div class="a c" style="top:471px;left:72px;transform:scaleX(0.9280);transform-origin:0 50%">D MG 01</div>
<div class="a c" style="top:471px;left:129px;transform:scaleX(0.9040);transform-origin:0 50%">Empresa Teste 1</div>
<div class="a c" style="top:471px;left:223px;transform:scaleX(0.8800);transform-origin:0 50%">2 - CPF</div>
<div class="a c" style="top:471px;left:370px;transform:scaleX(0.9290);transform-origin:0 50%">999.999.999-99</div>
<div class="a c" style="top:471px;left:507px;transform:scaleX(0.9470);transform-origin:0 50%">6073b1c4-bc60-e33b-a128-bcd3bdf9cdfc</div>
<div class="a c" style="top:471px;left:829px;transform:scaleX(0.9330);transform-origin:0 50%">1811155151001</div>
<div class="a c" style="top:471px;left:1003px;transform:scaleX(0.9980);transform-origin:0 50%">04/11/22</div>
<div class="a c" style="top:471px;left:1101px;transform:scaleX(0.9130);transform-origin:0 50%">Aquisic. Prod. Produtor Rural P.Física ou Seg. Especial Geral</div>
<div class="a c" style="top:471px;right:276px;transform:scaleX(0.9050);transform-origin:100% 50%">10.000,00</div>
<div class="a c" style="top:471px;right:206px;transform:scaleX(0.9070);transform-origin:100% 50%">130,00</div>
<div class="a c" style="top:471px;right:125px;transform:scaleX(0.9480);transform-origin:100% 50%">30,00</div>
<div class="a c" style="top:471px;right:46px;transform:scaleX(0.9240);transform-origin:100% 50%">20,00</div>
<div class="a c" style="top:496px;left:7px;transform:scaleX(0.8500);transform-origin:0 50%">FAT</div>
<div class="a c" style="top:496px;left:72px;transform:scaleX(0.9280);transform-origin:0 50%">D MG 01</div>
<div class="a c" style="top:496px;left:129px;transform:scaleX(0.9040);transform-origin:0 50%">Empresa Teste 1</div>
<div class="a c" style="top:496px;left:223px;transform:scaleX(0.8800);transform-origin:0 50%">2 - CPF</div>
<div class="a c" style="top:496px;left:370px;transform:scaleX(0.9290);transform-origin:0 50%">406.884.788-67</div>
<div class="a c" style="top:496px;left:507px;transform:scaleX(0.9470);transform-origin:0 50%">eabd7e55-ced5-6303-c82f-4f71ab32e381</div>
<div class="a c" style="top:496px;left:829px;transform:scaleX(0.9330);transform-origin:0 50%">15151515</div>
<div class="a c" style="top:496px;left:1003px;transform:scaleX(0.9980);transform-origin:0 50%">17/11/22</div>
<div class="a c" style="top:496px;left:1101px;transform:scaleX(0.9130);transform-origin:0 50%">Aquisic. Prod. Produtor Rural P.Física ou Seg. Especial Geral</div>
<div class="a c" style="top:496px;right:276px;transform:scaleX(0.9050);transform-origin:100% 50%">5.000,00</div>
<div class="a c" style="top:496px;right:206px;transform:scaleX(0.9070);transform-origin:100% 50%">210,00</div>
<div class="a c" style="top:496px;right:125px;transform:scaleX(0.9480);transform-origin:100% 50%">100,00</div>
<div class="a c" style="top:496px;right:46px;transform:scaleX(0.9240);transform-origin:100% 50%">80,00</div>
<div class="a c" style="top:522px;left:7px;transform:scaleX(0.8500);transform-origin:0 50%">FAT</div>
<div class="a c" style="top:522px;left:72px;transform:scaleX(0.9280);transform-origin:0 50%">D MG 01</div>
<div class="a c" style="top:522px;left:129px;transform:scaleX(0.9040);transform-origin:0 50%">Empresa Teste 1</div>
<div class="a c" style="top:522px;left:223px;transform:scaleX(0.8800);transform-origin:0 50%">2 - CPF</div>
<div class="a c" style="top:522px;left:370px;transform:scaleX(0.9290);transform-origin:0 50%">406.884.788-67</div>
<div class="a c" style="top:522px;left:507px;transform:scaleX(0.9470);transform-origin:0 50%">faf373c0-9bfd-0fc8-0161-08c8ff8ed5e4</div>
<div class="a c" style="top:522px;left:829px;transform:scaleX(0.9330);transform-origin:0 50%">151166112022</div>
<div class="a c" style="top:522px;left:1003px;transform:scaleX(0.9980);transform-origin:0 50%">16/11/22</div>
<div class="a c" style="top:522px;left:1101px;transform:scaleX(0.9130);transform-origin:0 50%">Aquisic. Prod. Produtor Rural P.Física ou Seg. Especial Geral</div>
<div class="a c" style="top:522px;right:276px;transform:scaleX(0.9050);transform-origin:100% 50%">10.000,00</div>
<div class="a c" style="top:522px;right:206px;transform:scaleX(0.9070);transform-origin:100% 50%">400,00</div>
<div class="a c" style="top:522px;right:125px;transform:scaleX(0.9480);transform-origin:100% 50%">200,00</div>
<div class="a c" style="top:522px;right:46px;transform:scaleX(0.9240);transform-origin:100% 50%">160,00</div>
<div class="a c" style="top:548px;left:7px;transform:scaleX(0.8500);transform-origin:0 50%">FAT</div>
<div class="a c" style="top:548px;left:72px;transform:scaleX(0.9280);transform-origin:0 50%">D MG 02</div>
<div class="a c" style="top:548px;left:129px;transform:scaleX(0.9040);transform-origin:0 50%">Empresa Teste 1</div>
<div class="a c" style="top:548px;left:223px;transform:scaleX(0.8800);transform-origin:0 50%">2 - CPF</div>
<div class="a c" style="top:548px;left:370px;transform:scaleX(0.9290);transform-origin:0 50%">999.999.999-99</div>
<div class="a c" style="top:548px;left:507px;transform:scaleX(0.9470);transform-origin:0 50%">32848d86-2c17-4647-e05b-65824f435eaf</div>
<div class="a c" style="top:548px;left:829px;transform:scaleX(0.9330);transform-origin:0 50%">88884444</div>
<div class="a c" style="top:548px;left:1003px;transform:scaleX(0.9980);transform-origin:0 50%">16/11/22</div>
<div class="a c" style="top:548px;left:1101px;transform:scaleX(0.9130);transform-origin:0 50%">Aquisic. Prod. Produtor Rural P.Física ou Seg. Especial Geral</div>
<div class="a c" style="top:548px;right:276px;transform:scaleX(0.9050);transform-origin:100% 50%">15.000,00</div>
<div class="a c" style="top:548px;right:206px;transform:scaleX(0.9070);transform-origin:100% 50%">115,00</div>
<div class="a c" style="top:548px;right:125px;transform:scaleX(0.9480);transform-origin:100% 50%">64,00</div>
<div class="a c" style="top:548px;right:46px;transform:scaleX(0.9240);transform-origin:100% 50%">32,00</div>
<div class="a c" style="top:574px;left:7px;transform:scaleX(0.8500);transform-origin:0 50%">FAT</div>
<div class="a c" style="top:574px;left:72px;transform:scaleX(0.9280);transform-origin:0 50%">D MG 02</div>
<div class="a c" style="top:574px;left:129px;transform:scaleX(0.9040);transform-origin:0 50%">Empresa Teste 1</div>
<div class="a c" style="top:574px;left:223px;transform:scaleX(0.8800);transform-origin:0 50%">2 - CPF</div>
<div class="a c" style="top:574px;left:370px;transform:scaleX(0.9290);transform-origin:0 50%">406.884.788-67</div>
<div class="a c" style="top:574px;left:507px;transform:scaleX(0.9470);transform-origin:0 50%">76530317-7f73-62b3-4036-44ef468ea56e</div>
<div class="a c" style="top:574px;left:829px;transform:scaleX(0.9330);transform-origin:0 50%">1851515151</div>
<div class="a c" style="top:574px;left:1003px;transform:scaleX(0.9980);transform-origin:0 50%">16/11/22</div>
<div class="a c" style="top:574px;left:1101px;transform:scaleX(0.9130);transform-origin:0 50%">Aquisic. Prod. Produtor Rural P.Física ou Seg. Especial Geral</div>
<div class="a c" style="top:574px;right:276px;transform:scaleX(0.9050);transform-origin:100% 50%">6.000,00</div>
<div class="a c" style="top:574px;right:206px;transform:scaleX(0.9070);transform-origin:100% 50%">78,50</div>
<div class="a c" style="top:574px;right:125px;transform:scaleX(0.9480);transform-origin:100% 50%">8,00</div>
<div class="a c" style="top:574px;right:46px;transform:scaleX(0.9240);transform-origin:100% 50%">2,00</div>
<div class="a c" style="top:599px;left:7px;transform:scaleX(0.8500);transform-origin:0 50%">FAT</div>
<div class="a c" style="top:599px;left:72px;transform:scaleX(0.9280);transform-origin:0 50%">D MG 02</div>
<div class="a c" style="top:599px;left:129px;transform:scaleX(0.9040);transform-origin:0 50%">Empresa Teste 1</div>
<div class="a c" style="top:599px;left:223px;transform:scaleX(0.8800);transform-origin:0 50%">2 - CPF</div>
<div class="a c" style="top:599px;left:370px;transform:scaleX(0.9290);transform-origin:0 50%">406.884.788-67</div>
<div class="a c" style="top:599px;left:507px;transform:scaleX(0.9470);transform-origin:0 50%">9ecbf1b0-abb0-94ac-9ef8-acbd7065f67a</div>
<div class="a c" style="top:599px;left:829px;transform:scaleX(0.9330);transform-origin:0 50%">101122222</div>
<div class="a c" style="top:599px;left:1003px;transform:scaleX(0.9980);transform-origin:0 50%">10/11/22</div>
<div class="a c" style="top:599px;left:1101px;transform:scaleX(0.9130);transform-origin:0 50%">Aquisic. Prod. Produtor Rural P.Física ou Seg. Especial Geral</div>
<div class="a c" style="top:599px;right:276px;transform:scaleX(0.9050);transform-origin:100% 50%">100.000,00</div>
<div class="a c" style="top:599px;right:206px;transform:scaleX(0.9070);transform-origin:100% 50%">1.100,00</div>
<div class="a c" style="top:599px;right:125px;transform:scaleX(0.9480);transform-origin:100% 50%">450,00</div>
<div class="a c" style="top:599px;right:46px;transform:scaleX(0.9240);transform-origin:100% 50%">225,00</div>
<div class="a c" style="top:625px;left:7px;transform:scaleX(0.8500);transform-origin:0 50%">FAT</div>
<div class="a c" style="top:625px;left:72px;transform:scaleX(0.9280);transform-origin:0 50%">D MG 02</div>
<div class="a c" style="top:625px;left:129px;transform:scaleX(0.9040);transform-origin:0 50%">Empresa Teste 1</div>
<div class="a c" style="top:625px;left:223px;transform:scaleX(0.8800);transform-origin:0 50%">2 - CPF</div>
<div class="a c" style="top:625px;left:370px;transform:scaleX(0.9290);transform-origin:0 50%">406.884.788-67</div>
<div class="a c" style="top:625px;left:507px;transform:scaleX(0.9470);transform-origin:0 50%">bc27488f-886b-6c02-7f27-ef8b5ef776e1</div>
<div class="a c" style="top:625px;left:829px;transform:scaleX(0.9330);transform-origin:0 50%">14141414</div>
<div class="a c" style="top:625px;left:1003px;transform:scaleX(0.9980);transform-origin:0 50%">14/11/22</div>
<div class="a c" style="top:625px;left:1101px;transform:scaleX(0.9130);transform-origin:0 50%">Aquisic. Prod. Produtor Rural P.Física ou Seg. Especial Geral</div>
<div class="a c" style="top:625px;right:276px;transform:scaleX(0.9050);transform-origin:100% 50%">10.000,00</div>
<div class="a c" style="top:625px;right:206px;transform:scaleX(0.9070);transform-origin:100% 50%">110,00</div>
<div class="a c" style="top:625px;right:125px;transform:scaleX(0.9480);transform-origin:100% 50%">45,00</div>
<div class="a c" style="top:625px;right:46px;transform:scaleX(0.9240);transform-origin:100% 50%">22,50</div>
<div class="a" style="left:1px;top:672px;width:1801px;height:1px;background:#fafafa"></div>
<div class="a" style="left:1801px;top:103px;width:1px;height:569px;background:#ddd"></div><div class="a" style="left:1802px;top:59px;width:1px;height:614px;background:#e2dddd"></div>
<div class="a sb"></div><div class="a sb2"></div>
</body></html>
